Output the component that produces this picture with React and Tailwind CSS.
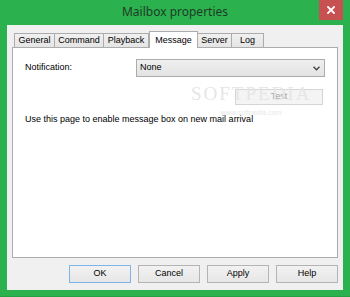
import React from 'react';

const tabs = [
  { label: 'General', w: 'w-[41px]' },
  { label: 'Command', w: 'w-[50px]' },
  { label: 'Playback', w: 'w-[46px]' },
  { label: 'Message', w: 'w-[49px]', active: true },
  { label: 'Server', w: 'w-[35px]' },
  { label: 'Log', w: 'w-[33px]' },
];

const DialogButton = ({ children, isDefault }) => (
  <button
    className={`w-[62px] h-[18px] text-[9px] text-black bg-gradient-to-b from-[#f2f2f2] to-[#e6e6e6] border ${
      isDefault ? 'border-[#7eb4ea]' : 'border-[#b4b4b4]'
    }`}
  >
    {children}
  </button>
);

const App = () => {
  return (
    <div
      className="w-[350px] h-[297px] bg-[#2bb24f] flex flex-col border-b border-[#22a043]"
      style={{ fontFamily: '"Liberation Sans", Arial, sans-serif' }}
    >
      {/* Title bar */}
      <div className="relative h-[25px] flex items-center justify-center shrink-0">
        <span
          className="text-[12px] text-[#1f3b26] pb-[1px]"
          style={{ fontFamily: '"Noto Sans", "Open Sans", sans-serif' }}
        >
          Mailbox properties
        </span>
        <div className="absolute right-[7px] top-0 w-[24px] h-[20px] bg-[#c75050] flex items-center justify-center">
          <svg width="8" height="8" viewBox="0 0 8 8">
            <path d="M1 1L7 7M7 1L1 7" stroke="white" strokeWidth="1.8" strokeLinecap="square" />
          </svg>
        </div>
      </div>

      {/* Client area */}
      <div className="flex-1 mx-[7px] mb-[6px] bg-[#f0f0f0] flex flex-col px-[5px] pt-[6px]">
        {/* Tabs */}
        <div className="flex items-end h-[16px] pl-[2px] relative z-10">
          {tabs.map((t) =>
            t.active ? (
              <div
                key={t.label}
                className={`${t.w} h-[17px] -mb-[1px] bg-white border border-b-0 border-[#acacac] flex items-start justify-center pt-[2px] text-[9px] text-black`}
              >
                {t.label}
              </div>
            ) : (
              <div
                key={t.label}
                className={`${t.w} h-[14px] bg-gradient-to-b from-[#f0f0f0] to-[#e5e5e5] border border-b-0 border-[#acacac] -ml-px first:ml-0 flex items-center justify-center text-[9px] text-black`}
              >
                {t.label}
              </div>
            )
          )}
        </div>

        {/* Panel */}
        <div className="relative h-[211px] bg-white border border-[#acacac] px-[12px] pt-[11px] text-[9px] text-black">
          <div className="flex items-start">
            <span className="w-[111px] pt-[2px]">Notification:</span>
            <div className="w-[189px] h-[18px] bg-gradient-to-b from-[#efefef] to-[#e3e3e3] border border-[#acacac] flex items-center justify-between pl-[3px] pr-[4px]">
              <span className="text-[9px]">None</span>
              <svg width="7" height="5" viewBox="0 0 7 5">
                <path d="M0.5 0.8L3.5 3.8L6.5 0.8" fill="none" stroke="#404040" strokeWidth="1.3" />
              </svg>
            </div>
          </div>

          <div className="mt-[12px] pl-[210px]">
            <div className="w-[88px] h-[16px] bg-[#f4f4f4] border border-[#d5d5d5] flex items-center justify-center text-[#a0a0a0]">
              Test
            </div>
          </div>

          <p className="mt-[8px]">Use this page to enable message box on new mail arrival</p>

          {/* watermark */}
          <div className="absolute left-[178px] top-[32px] flex flex-col items-center pointer-events-none">
            <span
              className="text-[19px] tracking-[2px] text-[#e6e6e6]"
              style={{ fontFamily: '"Liberation Serif", serif' }}
            >
              SOFTPEDIA
            </span>
            <span className="text-[7px] text-[#e8e8e8] -mt-[1px]">www.softpedia.com</span>
          </div>
        </div>

        {/* Buttons */}
        <div className="flex justify-end gap-[7px] mt-[7px] pr-0">
          <DialogButton isDefault>OK</DialogButton>
          <DialogButton>Cancel</DialogButton>
          <DialogButton>Apply</DialogButton>
          <DialogButton>Help</DialogButton>
        </div>
      </div>
    </div>
  );
};

export default App;
